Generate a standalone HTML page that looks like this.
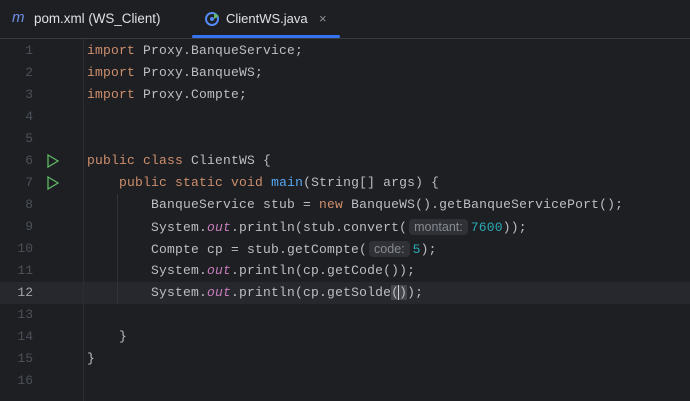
<!DOCTYPE html>
<html><head><style>
body{margin:0;width:690px;height:401px;background:#1e1f22;overflow:hidden;font-family:"Liberation Mono",monospace;}
.tabs{position:absolute;left:0;top:0;width:690px;height:38px;background:#1e1f22;border-bottom:1px solid #393b40;font-family:"Liberation Sans",sans-serif;font-size:13px;color:#dfe1e5;}
.tab{position:absolute;top:11px}
.ul{position:absolute;left:192px;top:35px;width:148px;height:3px;background:#3574f0;border-radius:2px}
.gut{position:absolute;left:83px;top:39px;width:1px;height:362px;background:#2b2d30}
.ln{position:absolute;left:0;width:33px;text-align:right;font-size:13px;color:#4b5059;height:22px;line-height:22px}
.code{position:absolute;left:87px;font-size:13px;letter-spacing:0.2px;color:#bcbec4;white-space:pre;height:22px;line-height:22px}
.k{color:#cf8e6d}.f{color:#56a8f5}.o{color:#c77dbb;font-style:italic}.n{color:#2aacb8}
.h{background:#2f3136;color:#868a91;font-family:"Liberation Sans",sans-serif;font-size:12.5px;letter-spacing:0;border-radius:4px;padding:1px 5px;margin:0 3px 0 2px}
.cur{position:absolute;left:0;top:282px;width:690px;height:22px;background:#26282e}
.run{position:absolute;left:46px}
.guide{position:absolute;width:1px;background:#313338}
</style></head><body>
<div class="cur"></div>
<div class="tabs">
<span class="tab" style="left:12px;color:#6f8fe8;font-style:italic;font-size:15px;top:9px">m</span>
<span class="tab" style="left:34px;font-size:13.4px">pom.xml (WS_Client)</span>
<svg class="tab" style="left:204px;top:11px" width="16" height="16" viewBox="0 0 16 16"><circle cx="8" cy="8" r="6" fill="none" stroke="#548af7" stroke-width="2"/><circle cx="8" cy="8" r="2" fill="#548af7"/><path d="M10 2 L15 5 L10 8Z" fill="#5fb865"/></svg>
<span class="tab" style="left:226px">ClientWS.java</span>
<span class="tab" style="left:319px;color:#8c8f94">×</span>
<div class="ul"></div>
</div>
<div class="gut"></div>
<div class="guide" style="left:117px;top:194px;height:110px"></div>
<svg class="run" style="top:154px" width="14" height="14"><path d="M2 1 L12 7 L2 13Z" fill="none" stroke="#5fb865" stroke-width="1.3"/></svg>
<svg class="run" style="top:176px" width="14" height="14"><path d="M2 1 L12 7 L2 13Z" fill="none" stroke="#5fb865" stroke-width="1.3"/></svg>
<div class="ln" style="top:40px">1</div><div class="ln" style="top:62px">2</div><div class="ln" style="top:84px">3</div><div class="ln" style="top:106px">4</div><div class="ln" style="top:128px">5</div><div class="ln" style="top:150px">6</div><div class="ln" style="top:172px">7</div><div class="ln" style="top:194px">8</div><div class="ln" style="top:216px">9</div><div class="ln" style="top:238px">10</div><div class="ln" style="top:260px">11</div><div class="ln" style="top:282px;color:#a1a3ab">12</div><div class="ln" style="top:304px">13</div><div class="ln" style="top:326px">14</div><div class="ln" style="top:348px">15</div><div class="ln" style="top:370px">16</div>
<div class="code" style="top:40px"><span class="k">import</span> Proxy.BanqueService;</div>
<div class="code" style="top:62px"><span class="k">import</span> Proxy.BanqueWS;</div>
<div class="code" style="top:84px"><span class="k">import</span> Proxy.Compte;</div>
<div class="code" style="top:150px"><span class="k">public class</span> ClientWS {</div>
<div class="code" style="top:172px">    <span class="k">public static void</span> <span class="f">main</span>(String[] args) {</div>
<div class="code" style="top:194px">        BanqueService stub = <span class="k">new</span> BanqueWS().getBanqueServicePort();</div>
<div class="code" style="top:216px">        System.<span class="o">out</span>.println(stub.convert(<span class="h">montant:</span><span class="n">7600</span>));</div>
<div class="code" style="top:238px">        Compte cp = stub.getCompte(<span class="h">code:</span><span class="n">5</span>);</div>
<div class="code" style="top:260px">        System.<span class="o">out</span>.println(cp.getCode());</div>
<div class="code" style="top:282px">        System.<span class="o">out</span>.println(cp.getSolde<span style="background:#43454a">(</span><span style="background:#43454a;border-left:1px solid #ced0d6;margin-left:-1px">)</span>);</div>
<div class="code" style="top:326px">    }</div>
<div class="code" style="top:348px">}</div>
</body></html>
